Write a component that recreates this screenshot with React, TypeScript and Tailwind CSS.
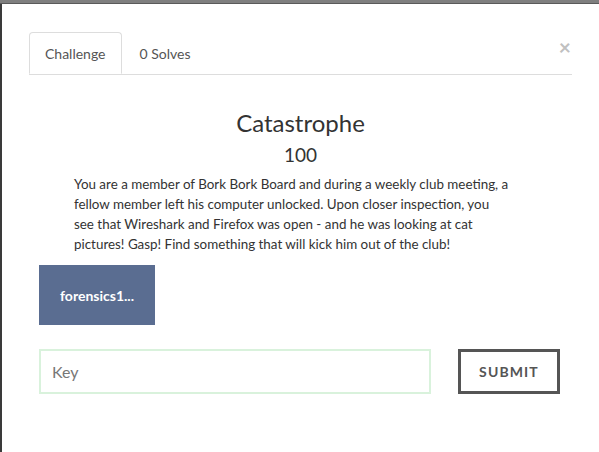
import React from 'react';

export default function App() {
  return (
    <div className="w-[599px] h-[452px] bg-[#3a3a3a] flex flex-col overflow-hidden" style={{ fontFamily: 'Lato, "Open Sans", sans-serif' }}>
      <div className="h-[4px] bg-[#7f7f7f] border-b border-[#5a5a5a] shrink-0" />
      <div className="flex-1 ml-[2px] bg-white relative">
        <button className="absolute right-[28px] top-[32px] text-[#c0c0c0] text-[21px] font-bold leading-none">×</button>
        <div className="pl-[27px] pr-[27px] pt-[28px]">
          <div className="flex border-b border-[#dddddd] w-[543px]">
            <div className="px-[15px] h-[42px] flex items-center border border-[#dddddd] border-b-white rounded-t-[4px] -mb-px text-[14px] text-[#555]">Challenge</div>
            <div className="px-[18px] h-[42px] flex items-center text-[14px] text-[#555]">0 Solves</div>
          </div>
        </div>
        <div className="flex flex-col items-center mt-[33px]">
          <h1 className="text-[24px] leading-[30px] text-[#333]">Catastrophe</h1>
          <h2 className="text-[19px] leading-[26px] text-[#333] mt-[4px]">100</h2>
        </div>
        <p className="ml-[72px] mt-[6px] w-[460px] text-[13.4px] leading-[20px] text-[#333]">
          You are a member of Bork Bork Board and during a weekly club meeting, a<br />
          fellow member left his computer unlocked. Upon closer inspection, you<br />
          see that Wireshark and Firefox was open - and he was looking at cat<br />
          pictures! Gasp! Find something that will kick him out of the club!
        </p>
        <div className="ml-[37px] mt-[11px] w-[116px] h-[60px] bg-[#5a6d91] flex items-center justify-center text-white text-[14px] font-bold">forensics1...</div>
        <div className="ml-[37px] mt-[24px] flex items-center">
          <div className="w-[392px] h-[45px] border-2 border-[#d9f2dc] flex items-center px-[11px] text-[16px] text-[#777]">Key</div>
          <button className="ml-[27px] w-[102px] h-[45px] border-[3px] border-[#555] text-[#555] text-[14px] font-bold tracking-[0.08em]">SUBMIT</button>
        </div>
      </div>
    </div>
  );
}
